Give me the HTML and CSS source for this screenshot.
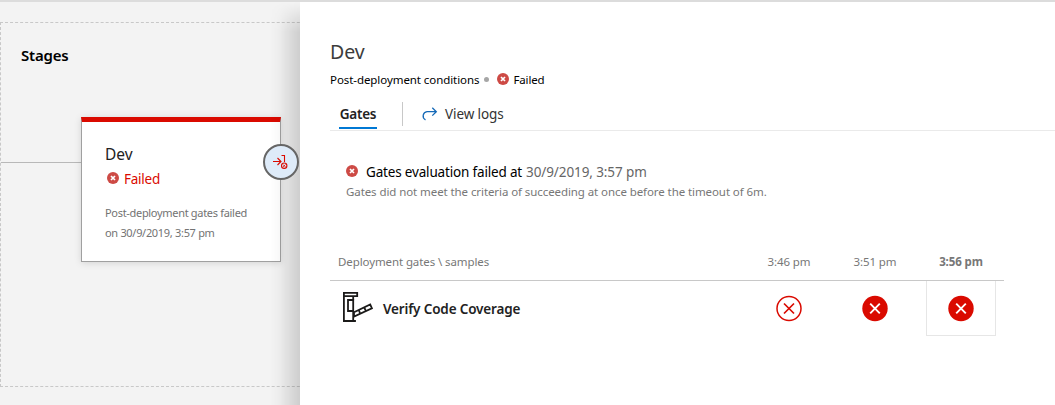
FILE: index.html
```html
<!DOCTYPE html>
<html lang="en">
<head>
<meta charset="utf-8">
<title>Dev release stages</title>
<link rel="stylesheet" href="styles.css">
</head>
<body>
<svg class="symbols" aria-hidden="true">
  <symbol id="failed" viewBox="0 0 12 12"><circle cx="6" cy="6" r="6" fill="#cd4a45"/><path d="M4 4l4 4M8 4l-4 4" stroke="#fff" stroke-width="1.7"/></symbol>
  <symbol id="sample-failed" viewBox="0 0 26 26"><circle cx="13" cy="12.500" r="12.700" fill="#da0a00"/><path d="M8.200 7.700l9.600 9.600M17.800 7.700l-9.600 9.600" stroke="#fff" stroke-width="1.900"/></symbol>
</svg>
<div class="app">
  <section class="canvas">
    <div class="stages">
      <h2 class="stages-title"><span>Stages</span></h2>
      <div class="lane">
        <div class="connector"></div>
        <article class="stage-card">
          <h3 class="card-name"><span>Dev</span></h3>
          <div class="card-status"><svg class="status-icon"><use href="#failed"/></svg><span>Failed</span></div>
          <p class="card-note"><span>Post-deployment gates failed</span><br><span>on 30/9/2019, 3:57 pm</span></p>
          <div class="gate-badge">
            <svg width="16" height="16" viewBox="0 0 16 16" fill="none" stroke="#da0a00" stroke-width="1.100"><path d="M0 7.500h8M4.500 4L8 7.500l-3.500 3.500M8.500 1.500h3V8"/><circle cx="11.200" cy="11.700" r="2.700"/><path d="M10 10.500l2.400 2.400M12.400 10.500L10 12.900" stroke-width=".9"/></svg>
          </div>
        </article>
      </div>
    </div>
  </section>
  <main class="panel">
    <h1 class="panel-title"><span>Dev</span></h1>
    <div class="panel-sub"><span class="condition">Post-deployment conditions</span><i class="dot"></i><svg class="status-icon"><use href="#failed"/></svg><span class="state">Failed</span></div>
    <nav class="tabs">
      <a class="tab"><span>Gates</span></a>
      <i class="divider"></i>
      <a class="logs"><svg width="16" height="14" viewBox="0 0 16 14" fill="none" stroke="#1469b7" stroke-width="1.300"><path d="M3.500 12.800A4.300 4.300 0 0 1 5 4.700h9.200M10.300.8l4 3.900-4 3.900"/></svg><span>View logs</span></a>
    </nav>
    <section class="summary">
      <div class="summary-head"><svg class="status-icon"><use href="#failed"/></svg><span>Gates evaluation failed at</span><time>30/9/2019, 3:57 pm</time></div>
      <p class="summary-text"><span>Gates did not meet the criteria of succeeding at once before the timeout of 6m.</span></p>
    </section>
    <section class="samples">
      <div class="row head"><span class="name">Deployment gates \ samples</span><span class="col">3:46 pm</span><span class="col">3:51 pm</span><b class="col">3:56 pm</b></div>
      <div class="row body">
        <div class="name gate">
          <svg width="30" height="31" viewBox="0 0 30 31" fill="none" stroke="#1b1a19" stroke-width="1.800"><path d="M.9.9h13.300v3.300H.9zM.9 4.200V29h12M10.200 4.200v4M10.200 19v10"/><path d="M5 8h5.200v11H5zM11 20.300l16.200-7.800 1.700 3.700L11 24.500zM15.800 18l1.500 4M21.300 15.300l1.600 4"/></svg>
          <span>Verify Code Coverage</span>
        </div>
        <div class="col"><svg width="26" height="26" viewBox="0 0 26 26" fill="none" stroke="#da0a00"><circle cx="13" cy="12.500" r="12" stroke-width="1.500"/><path d="M8 7.500l10 10M18 7.500l-10 10" stroke-width="1.700"/></svg></div>
        <div class="col"><svg width="26" height="26"><use href="#sample-failed"/></svg></div>
        <div class="col selected"><svg width="26" height="26"><use href="#sample-failed"/></svg></div>
      </div>
    </section>
  </main>
</div>
</body>
</html>
```
FILE: styles.css
```css
* { box-sizing: border-box; }
body { margin: 0; font-family: "Noto Sans", "Open Sans", sans-serif; background: #fff; }
h1, h2, h3, p { margin: 0; font-weight: 400; }
svg { display: block; flex: none; overflow: visible; }
symbol { overflow: visible; }
span, time, b { white-space: nowrap; }
.symbols { position: absolute; width: 0; height: 0; }
.status-icon { width: 12px; height: 12px; }

.app { display: flex; width: 1055px; height: 405px; overflow: hidden; border-top: 2px solid #dcdcdc; }
.canvas { width: 300px; flex: none; padding-top: 20px; background: #f3f3f3; }
.stages { width: 330px; height: 365px; border: 1px dashed #c8c8c8; padding-top: 20px; }
.stages-title { height: 25px; padding-left: 20px; line-height: 24px; font-size: 15px; letter-spacing: -.2px; font-weight: 600; color: #000; }
.lane { display: flex; margin-top: 49px; }
.connector { width: 80px; height: 1px; margin-top: 45px; background: #b8b8b8; }
.stage-card { position: relative; width: 200px; height: 145px; padding: 21px 0 0 23px; background: #fff; border: 1px solid #a0a0a0; border-top: 5px solid #da0a00; box-shadow: 0 1px 7px rgba(0,0,0,.13); }
.card-name { height: 24px; line-height: 22px; font-size: 15.500px; color: #222; }
.card-status { display: flex; align-items: center; gap: 5px; height: 24px; padding-left: 2px; color: #da0a00; font-size: 13.500px; letter-spacing: -.25px; }
.card-status .status-icon { margin-top: -3px; }
.card-note { margin-top: 12px; line-height: 20px; font-size: 11px; letter-spacing: -.31px; color: #737373; }
.gate-badge { position: absolute; z-index: 3; left: 181px; top: 22px; width: 36px; height: 36px; border: 2px solid #666; border-radius: 50%; background: #deebf9; display: flex; align-items: center; justify-content: center; }

.panel { position: relative; flex: 1; padding: 36px 0 0 30px; background: #fff; }
.panel::before { content: ""; position: absolute; z-index: 2; left: -30px; top: 0; width: 30px; height: 403px; background: linear-gradient(to right, rgba(0,0,0,0), rgba(0,0,0,.025) 30%, rgba(0,0,0,.11) 75%, rgba(0,0,0,.15)); -webkit-mask-image: linear-gradient(transparent, #000 30px); mask-image: linear-gradient(transparent, #000 30px); }
.panel-title { height: 31px; line-height: 28px; font-size: 19.500px; color: #3c3c3c; }
.panel-sub { display: flex; align-items: center; height: 21px; padding-bottom: 1px; font-size: 11.500px; color: #000; }
.condition { letter-spacing: -.07px; }
.state { letter-spacing: -.15px; }
.dot { width: 5px; height: 5px; margin: 0 8px 0 5px; border-radius: 50%; background: #a6a6a6; }
.panel-sub .status-icon { margin-right: 4px; }
.tabs { display: flex; height: 41px; padding: 8px 0 0 9px; border-bottom: 1px solid #eaeaea; }
.tab { width: 38px; height: 31px; line-height: 32px; border-bottom: 2px solid #0078d4; text-align: center; font-size: 13.500px; letter-spacing: -.25px; font-weight: 600; color: #222; }
.divider { width: 1px; height: 24px; margin: 4px 19px 0 25px; background: #c8c8c8; }
.logs { display: flex; align-items: center; gap: 7px; height: 32px; font-size: 13.500px; letter-spacing: -.1px; color: #333; }
.summary { padding: 31px 0 0 16px; }
.summary-head { display: flex; align-items: center; height: 20px; font-size: 13.500px; letter-spacing: -.17px; }
.summary-head .status-icon { margin: -2px 8px 0 0; }
.summary-head time { margin-left: 4px; letter-spacing: -.1px; color: #666; }
.summary-text { line-height: 20px; font-size: 11.500px; letter-spacing: -.085px; color: #777; }
.samples { width: 674px; margin-top: 50px; }
.row { display: grid; grid-template-columns: 416px repeat(3, 86px); }
.head { height: 29px; border-bottom: 1px solid #c8c8c8; line-height: 20px; font-size: 11.500px; letter-spacing: -.1px; color: #777; }
.name { padding-left: 8px; }
.head .col { text-align: center; }
.body { height: 55px; }
.gate { display: flex; align-items: center; gap: 10px; padding: 0 0 3px 13px; font-size: 13.500px; letter-spacing: -.15px; font-weight: 600; color: #222; }
.gate span { padding-top: 4px; }
.body .col { display: flex; align-items: center; justify-content: center; }
.body .selected { margin: 0 8px; padding-top: 1px; border: 1px solid #e6e6e6; border-top: 0; }
```
